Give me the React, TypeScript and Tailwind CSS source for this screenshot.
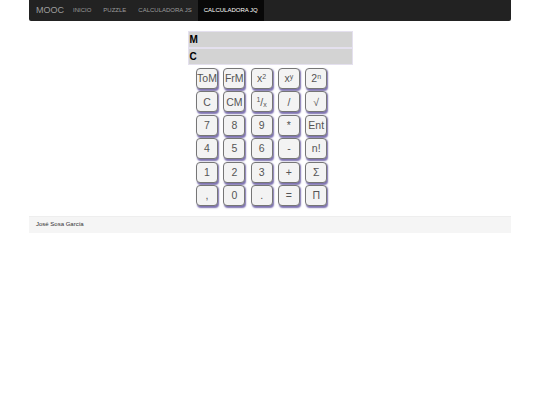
import React from 'react'

const navLinks = ['INICIO', 'PUZZLE', 'CALCULADORA JS', 'CALCULADORA JQ']

type Key = { label: React.ReactNode; id: string }

const keys: Key[] = [
  { id: 'tom', label: 'ToM' },
  { id: 'frm', label: 'FrM' },
  { id: 'x2', label: <span>x<sup className="text-[7px]">2</sup></span> },
  { id: 'xy', label: <span>x<sup className="text-[7px]">y</sup></span> },
  { id: '2n', label: <span>2<sup className="text-[7px]">n</sup></span> },
  { id: 'c', label: 'C' },
  { id: 'cm', label: 'CM' },
  { id: 'inv', label: <span><sup className="text-[7px]">1</sup>/<sub className="text-[7px]">x</sub></span> },
  { id: 'div', label: '/' },
  { id: 'sqrt', label: '√' },
  { id: '7', label: '7' },
  { id: '8', label: '8' },
  { id: '9', label: '9' },
  { id: 'mul', label: '*' },
  { id: 'ent', label: 'Ent' },
  { id: '4', label: '4' },
  { id: '5', label: '5' },
  { id: '6', label: '6' },
  { id: 'sub', label: '-' },
  { id: 'fact', label: 'n!' },
  { id: '1', label: '1' },
  { id: '2', label: '2' },
  { id: '3', label: '3' },
  { id: 'add', label: '+' },
  { id: 'sum', label: 'Σ' },
  { id: 'comma', label: ',' },
  { id: '0', label: '0' },
  { id: 'dot', label: '.' },
  { id: 'eq', label: '=' },
  { id: 'prod', label: 'Π' },
]

export default function App() {
  return (
    <div className="min-h-[405px] bg-white font-['Liberation_Sans',Arial,sans-serif]">
      <nav className="mx-[29px] flex h-[21px] items-stretch rounded-b-[2px] bg-[#222222] pl-[7px]">
        <span className="flex items-center pr-[3px] text-[9px] text-[#9d9d9d]">MOOC</span>
        {navLinks.map((l) => (
          <span
            key={l}
            className={
              'flex items-center px-[6px] text-[6px] ' +
              (l === 'CALCULADORA JQ' ? 'bg-[#080808] text-white' : 'text-[#9d9d9d]')
            }
          >
            {l}
          </span>
        ))}
      </nav>

      <main className="mx-auto mt-[10px] w-[165px]">
        <div className="flex h-[17px] items-center border border-[#e4e0ee] bg-[#d3d3d3] pl-[1px] text-[10px] font-bold text-black">
          M
        </div>
        <div className="flex h-[17px] items-center border border-[#e4e0ee] bg-[#d3d3d3] pl-[1px] text-[10px] font-bold text-black">
          C
        </div>
        <div className="mt-[3px] grid w-[140px] grid-cols-[repeat(5,22px)] gap-x-[5.3px] gap-y-[2.4px] pl-[8.5px]">
          {keys.map((k) => (
            <button
              key={k.id}
              className="flex h-[21px] w-[22px] items-center justify-center rounded-[4px] border border-[#767676] bg-[#f3f3f3] text-[10.5px] leading-none text-[#555] shadow-[1px_1.5px_1.5px_#7d72b0]"
            >
              {k.label}
            </button>
          ))}
        </div>
      </main>

      <footer className="mx-[29px] mt-[10px] flex h-[17px] items-center border-t border-[#eeeeee] bg-[#f5f5f5] pl-[7px] text-[6px] text-[#333]">
        José Sosa García
      </footer>
    </div>
  )
}
